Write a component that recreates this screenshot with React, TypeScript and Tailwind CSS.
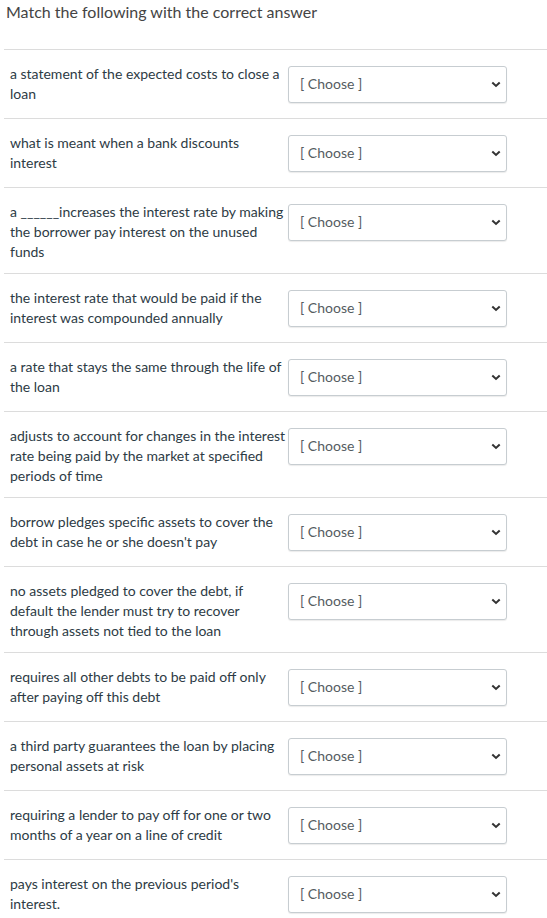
import React from "react";

const items: string[] = [
  "a statement of the expected costs to close a loan",
  "what is meant when a bank discounts interest",
  "a ______increases the interest rate by making the borrower pay interest on the unused funds",
  "the interest rate that would be paid if the interest was compounded annually",
  "a rate that stays the same through the life of the loan",
  "adjusts to account for changes in the interest rate being paid by the market at specified periods of time",
  "borrow pledges specific assets to cover the debt in case he or she doesn't pay",
  "no assets pledged to cover the debt, if default the lender must try to recover through assets not tied to the loan",
  "requires all other debts to be paid off only after paying off this debt",
  "a third party guarantees the loan by placing personal assets at risk",
  "requiring a lender to pay off for one or two months of a year on a line of credit",
  "pays interest on the previous period's interest.",
];

function Chevron() {
  return (
    <svg width="10" height="7" viewBox="0 0 10 7" className="shrink-0">
      <path d="M1.3 1.4 L5 4.9 L8.7 1.4" fill="none" stroke="#333" strokeWidth="2" />
    </svg>
  );
}

export default function App() {
  return (
    <div className="w-[547px] bg-white font-['Lato','Noto_Sans',sans-serif]">
      <div className="h-[49px] pl-[6px] text-[16px] leading-[24px] text-[#444]">
        Match the following with the correct answer
      </div>
      <div className="ml-[4px]">
        {items.map((t, i) => (
          <div key={i} className="flex border-t border-[#dcdcdc]">
            <div className="w-[285px] shrink-0 pl-[6px] pt-[14px] pb-[11px] text-[14px] leading-[20px] text-[#2d3b45]">
              {t}
            </div>
            <div className="pt-[16px] pb-[15px] -ml-[1px]">
              <div className="flex h-[37px] w-[219px] items-center justify-between rounded-[3px] border border-[#c7cdd1] bg-white pl-[11px] pr-[5px] text-[14px] text-[#555c61] shadow-[0_1px_1px_rgba(0,0,0,0.08)]">
                <span className="pb-[3px]">[ Choose ]</span>
                <Chevron />
              </div>
            </div>
          </div>
        ))}
      </div>
    </div>
  );
}
